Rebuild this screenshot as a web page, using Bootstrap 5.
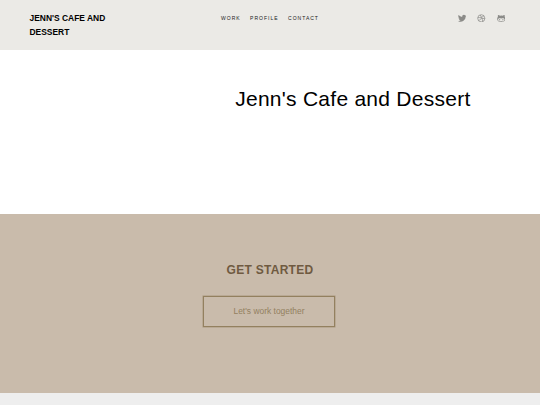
<!DOCTYPE html>
<html lang="en">
<head>
    <meta charset="UTF-8">
    <meta name="viewport" content="width=device-width, initial-scale=1.0">
    <title>Jenn's Cafe and Dessert</title>
    <link href="https://cdn.jsdelivr.net/npm/bootstrap@5.3.0/dist/css/bootstrap.min.css" rel="stylesheet">
    <script src="https://cdn.jsdelivr.net/npm/bootstrap@5.3.0/dist/js/bootstrap.bundle.min.js"></script>
    <style>
        body {
            font-family: "Liberation Sans", Arial, sans-serif;
            height: 405px;
            color: #000;
            background: #eee;
        }
        a { text-decoration: none; }
        .site-header {
            height: 49.7px;
            padding: 10.6px 34.5px 0 29.5px;
            background: #ebeae6;
        }
        .site-brand {
            width: 100px;
            font-size: 8.45px;
            line-height: 14.3px;
            color: #000;
        }
        .site-nav {
            gap: 9.4px;
            padding: 4px 0 0 5px;
            font-size: 5.04px;
            line-height: 7px;
            letter-spacing: 1px;
        }
        .site-nav a { color: #222; }
        .site-social {
            width: 100px;
            gap: 11px;
            padding-top: 3px;
        }
        .site-social a { color: #8b8b88; }
        .site-social svg { display: block; width: 8.6px; height: 8.6px; }
        .hero { height: 164px; padding: 34.5px 69.5px 0 0; }
        .hero h1 {
            font-size: 21px;
            line-height: 30px;
            letter-spacing: .26px;
        }
        .get-started { height: 179.5px; padding-top: 48px; background: #c9bbab; }
        .get-started h2 {
            font-size: 12px;
            line-height: 16px;
            letter-spacing: .28px;
            margin-bottom: 18.3px;
            color: #6f5a41;
        }
        .btn-work {
            --bs-btn-color: #93805f;
            --bs-btn-border-color: #93805f;
            width: 132px;
            height: 31px;
            margin-right: 2px;
            padding: 0;
            border-width: 1px;
            box-shadow: 0 0 0 .5px rgba(147, 128, 95, .6);
            font-size: 8.45px;
            line-height: 28.5px;
        }
    </style>
</head>
<body class="overflow-hidden">
    <!-- Header -->
    <header class="site-header d-flex justify-content-between align-items-start">
        <a class="site-brand fw-bold" href="#">JENN'S CAFE AND DESSERT</a>
        <nav class="site-nav d-flex">
            <a href="#">WORK</a>
            <a href="#">PROFILE</a>
            <a href="#">CONTACT</a>
        </nav>
        <div class="site-social d-flex justify-content-end">
            <a href="#" aria-label="Twitter">
                <svg viewBox="0 0 24 24" fill="currentColor"><path d="M24 4.6a10 10 0 0 1-2.8.8 5 5 0 0 0 2.1-2.7 10 10 0 0 1-3.1 1.2 4.9 4.9 0 0 0-8.4 4.5A14 14 0 0 1 1.7 3.1a4.9 4.9 0 0 0 1.5 6.6 5 5 0 0 1-2.2-.6 4.9 4.9 0 0 0 3.9 4.9 5 5 0 0 1-2.2.1 4.9 4.9 0 0 0 4.6 3.4A9.9 9.9 0 0 1 0 19.5a14 14 0 0 0 21.5-12.4A10 10 0 0 0 24 4.6z"/></svg>
            </a>
            <a href="#" aria-label="Dribbble">
                <svg viewBox="0 0 24 24" fill="none" stroke="currentColor" stroke-width="2"><circle cx="12" cy="12" r="10"/><path d="M8.5 2.7c4 5 6.5 10.5 7.6 18.2M2.3 10.2c7 .1 13.5-1.2 17.2-5.4M5 19c3.5-6 9.5-8 17-6"/></svg>
            </a>
            <a href="#" aria-label="GitHub">
                <svg viewBox="0 0 24 24" fill="currentColor"><path fill-rule="evenodd" d="M3 2.5c2 0 4 1 5.5 2.2a20 20 0 0 1 7 0C17 3.5 19 2.5 21 2.5c.9 2 .8 4 .3 5.3C23 9.5 23.5 11.5 23.5 14c0 6-4.5 8-11.5 8S.5 20 .5 14c0-2.5.5-4.5 2.2-6.2C2.2 6.5 2.1 4.5 3 2.5zM7 12c-2.5 0-4 1.5-4 4 0 3.5 3 4.5 9 4.5s9-1 9-4.5c0-2.5-1.5-4-4-4-2 0-3 .3-5 .3S9 12 7 12z"/><ellipse cx="7.5" cy="16" rx="1.5" ry="2.2"/><ellipse cx="16.5" cy="16" rx="1.5" ry="2.2"/></svg>
            </a>
        </div>
    </header>

    <!-- Hero -->
    <section class="hero bg-white text-end">
        <h1 class="fw-normal mb-0">Jenn's Cafe and Dessert</h1>
    </section>

    <!-- Get started -->
    <section class="get-started text-center">
        <h2 class="fw-bold">GET STARTED</h2>
        <a class="btn btn-work rounded-0" href="#">Let's work together</a>
    </section>
</body>
</html>
